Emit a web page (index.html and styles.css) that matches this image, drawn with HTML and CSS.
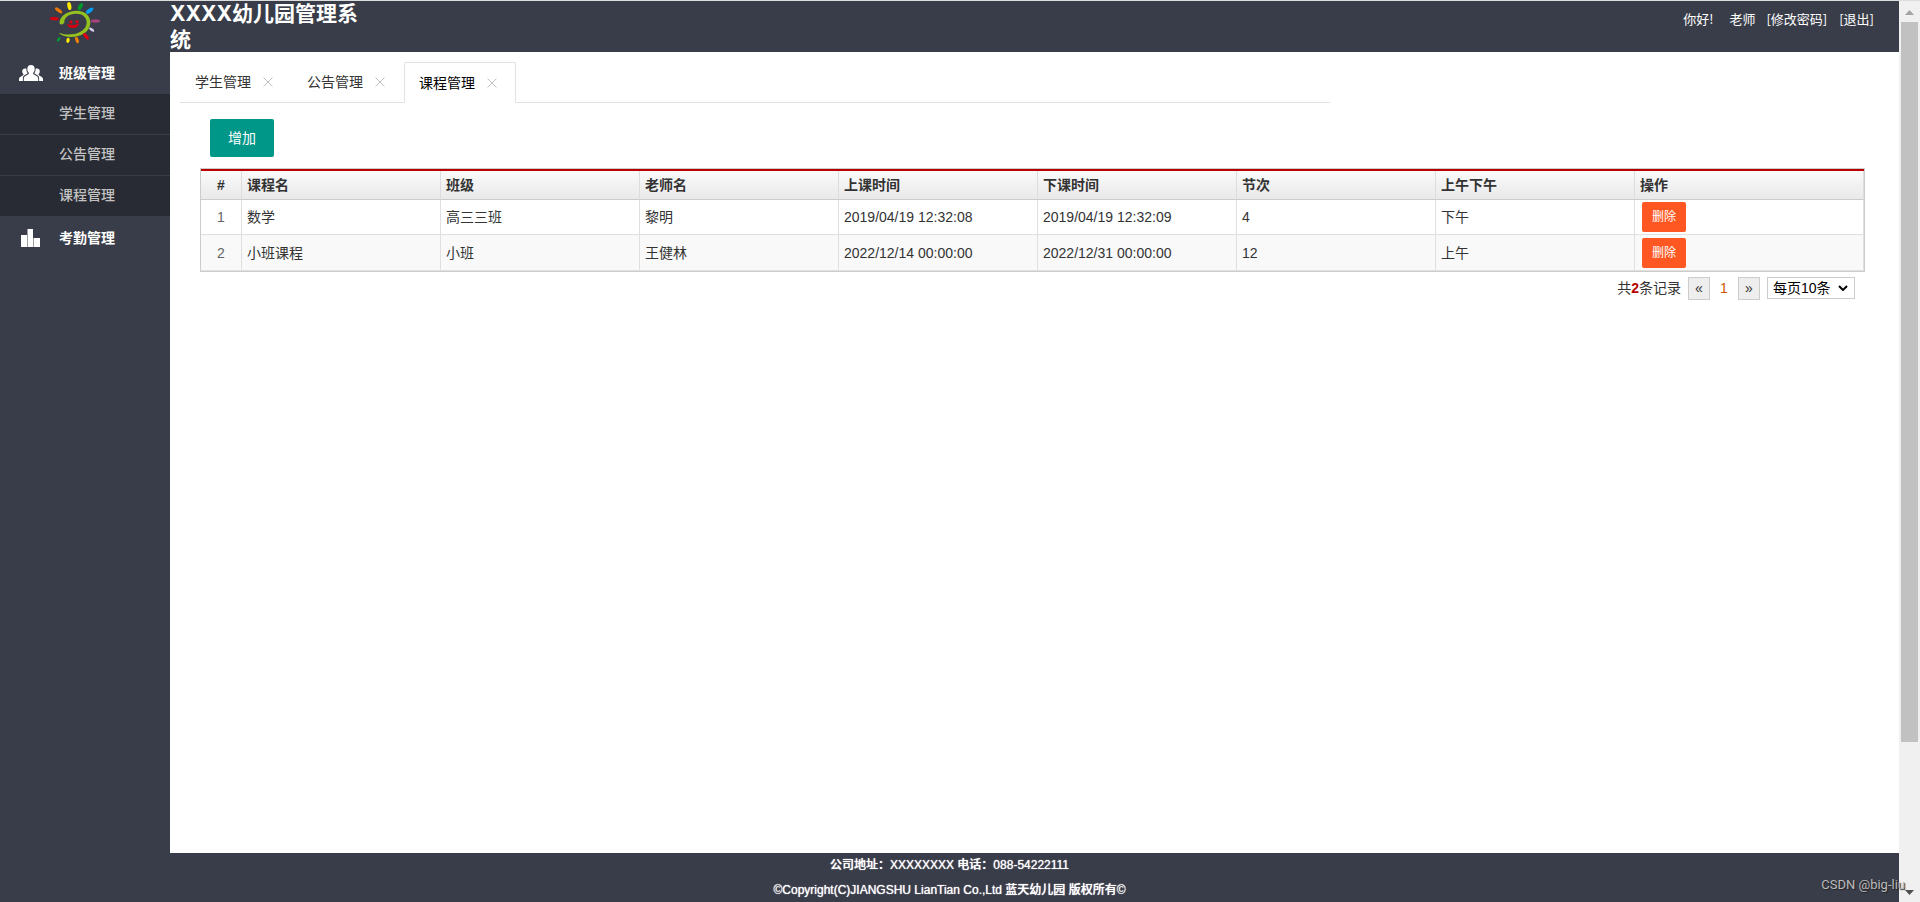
FILE: index.html
```html
<!DOCTYPE html>
<html lang="zh-CN">
<head>
<meta charset="utf-8">
<title>XXXX幼儿园管理系统</title>
<link rel="stylesheet" href="styles.css">
</head>
<body>
<div class="app">
  <div class="page">
    <div class="main">
      <aside class="sidebar">
        <div class="logo">
          <svg width="50" height="44" viewBox="150 3 150 132" aria-label="标志">
            <path d="M179 71C176 54 196 33 228 32C256 32 272 48 271 70C269 96 243 111 214 111C198 111 184 107 176 98C190 103 203 104 214 103C240 101 259 87 260 68C260 51 248 41 229 41C206 41 191 54 193 68C188 74 182 75 179 71Z" fill="#95c11f"/>
            <g fill="#d8000f"><circle cx="213" cy="66" r="5"/><circle cx="231" cy="65" r="5"/><path d="M201 71Q219 80 238 70Q234 84 219 84Q205 84 201 71Z"/></g>
            <ellipse cx="163" cy="56" rx="14" ry="5" fill="#d7000f" transform="rotate(4 163 56)"/>
            <ellipse cx="176" cy="31" rx="13" ry="5" fill="#ee7800" transform="rotate(38 176 31)"/>
            <ellipse cx="208" cy="18" rx="12" ry="6" fill="#ffe800" transform="rotate(80 208 18)"/>
            <ellipse cx="241" cy="20" rx="12" ry="6" fill="#009a2b" transform="rotate(-62 241 20)"/>
            <ellipse cx="269" cy="32" rx="13" ry="6" fill="#009cf2" transform="rotate(-37 269 32)"/>
            <ellipse cx="286" cy="63" rx="14" ry="5" fill="#a5437c"/>
            <ellipse cx="275" cy="89" rx="9" ry="4" fill="#d8cbea" transform="rotate(35 275 89)"/>
            <ellipse cx="258" cy="109" rx="12" ry="5" fill="#e2000f" transform="rotate(52 258 109)"/>
            <ellipse cx="231" cy="120" rx="10" ry="5" fill="#f08000" transform="rotate(72 231 120)"/>
            <ellipse cx="204" cy="121" rx="8" ry="5" fill="#ffec00" transform="rotate(-80 204 121)"/>
            <ellipse cx="176" cy="118" rx="8" ry="4" fill="#009933" transform="rotate(-58 176 118)"/>
          </svg>
        </div>
        <nav class="menu">
          <a class="menu-title" href="#class">
            <svg class="menu-icon" width="24" height="16" viewBox="0 0 24 16"><path fill="#fff" d="M12 0c2.400 0 3.700 1.600 3.700 3.900 0 1.700-.6 3-1.500 3.800v1.200l3.800 2.300c.8.5 1.100 1.400 1.200 2.800V16H4.800v-2c.1-1.400.4-2.300 1.200-2.800l3.800-2.300V7.700c-.9-.8-1.500-2.100-1.500-3.800C8.300 1.600 9.600 0 12 0zM6 3.500c.6 0 1 .1 1.400.3-.1 1.800.3 3.200 1.300 4.500L5.200 10.400C4.200 11.200 3.900 12 3.900 14v2H0v-1.500c0-1.300.4-2 1.200-2.500l3.200-2V9C3.600 8.400 3.200 7.400 3.200 6.300 3.200 4.600 4.300 3.500 6 3.500zM18 3.500c-.6 0-1 .1-1.400.3.100 1.800-.3 3.200-1.300 4.500l3.500 2.100c1 .8 1.300 1.600 1.300 3.600v2H24v-1.500c0-1.300-.4-2-1.200-2.500l-3.200-2V9c.8-.6 1.200-1.600 1.200-2.700 0-1.700-1.100-2.800-2.800-2.800z"/></svg>
            班级管理
          </a>
          <ul class="submenu">
            <li><a href="#students">学生管理</a></li>
            <li><a href="#notices">公告管理</a></li>
            <li><a href="#courses">课程管理</a></li>
          </ul>
          <a class="menu-title" href="#attendance">
            <svg class="menu-icon" width="24" height="18" viewBox="0 0 24 18"><path fill="#fff" d="M2 6h6v12H2zM8.500 0h5.500v18H8.500zM14.500 9H21v9h-6.500z"/></svg>
            考勤管理
          </a>
        </nav>
      </aside>
      <div class="body">
        <header class="header">
          <h1 class="brand">XXXX幼儿园管理系统</h1>
          <div class="user">
            <span class="hello">你好!</span>
            <span>老师</span>
            <a href="#password">[修改密码]</a>
            <a href="#logout">[退出]</a>
          </div>
        </header>
        <ul class="tabs">
          <li class="tab">学生管理<button class="close" aria-label="关闭学生管理"><svg width="10" height="10" viewBox="0 0 10 10"><path d="M.5.5l9 9M9.500.5l-9 9"/></svg></button></li>
          <li class="tab">公告管理<button class="close" aria-label="关闭公告管理"><svg width="10" height="10" viewBox="0 0 10 10"><path d="M.5.5l9 9M9.500.5l-9 9"/></svg></button></li>
          <li class="tab active">课程管理<button class="close" aria-label="关闭课程管理"><svg width="10" height="10" viewBox="0 0 10 10"><path d="M.5.5l9 9M9.500.5l-9 9"/></svg></button></li>
        </ul>
        <main class="content">
          <button class="add">增加</button>
          <div class="grid">
            <table class="table">
              <thead>
                <tr><th class="num">#</th><th class="data">课程名</th><th class="data">班级</th><th class="data">老师名</th><th class="data">上课时间</th><th class="data">下课时间</th><th class="data">节次</th><th class="data">上午下午</th><th>操作</th></tr>
              </thead>
              <tbody>
                <tr><td class="num">1</td><td>数学</td><td>高三三班</td><td>黎明</td><td>2019/04/19 12:32:08</td><td>2019/04/19 12:32:09</td><td>4</td><td>下午</td><td><button class="delete">删除</button></td></tr>
                <tr><td class="num">2</td><td>小班课程</td><td>小班</td><td>王健林</td><td>2022/12/14 00:00:00</td><td>2022/12/31 00:00:00</td><td>12</td><td>上午</td><td><button class="delete">删除</button></td></tr>
              </tbody>
            </table>
          </div>
          <div class="pager">
            <span>共<b class="total">2</b>条记录</span>
            <button class="step" aria-label="上一页">«</button>
            <span class="current">1</span>
            <button class="step" aria-label="下一页">»</button>
            <div class="size">
              <select class="size-select" aria-label="每页条数"><option>每页10条</option></select>
              <svg class="chevron" width="10" height="6" viewBox="0 0 10 6"><path d="M1 1l4 4 4-4"/></svg>
            </div>
          </div>
        </main>
      </div>
    </div>
    <footer class="footer">
      <p>公司地址：XXXXXXXX 电话：088-54222111</p>
      <p>©Copyright(C)JIANGSHU LianTian Co.,Ltd 蓝天幼儿园 版权所有©</p>
    </footer>
  </div>
  <div class="scrollbar">
    <svg width="9" height="5" viewBox="0 0 9 5"><path d="M0 5L4.500 0 9 5z" fill="#a3a3a3"/></svg>
    <div class="track"><div class="thumb"></div></div>
    <svg width="9" height="5" viewBox="0 0 9 5"><path d="M0 0h9L4.500 5z" fill="#505050"/></svg>
  </div>
  <div class="watermark">CSDN @big-liu</div>
</div>
</body>
</html>
```
FILE: styles.css
```css
* {
  box-sizing: border-box;
}

body {
  margin: 0;
  font: 14px/24px "Liberation Sans", "Noto Sans CJK SC", sans-serif;
  color: #333;
  background: #fff;
}

ul,
p,
h1 {
  margin: 0;
  padding: 0;
  list-style: none;
}

a {
  color: inherit;
  text-decoration: none;
}

button,
select {
  margin: 0;
  padding: 0;
  border: 0;
  font: inherit;
  color: inherit;
  background: none;
}

.app {
  position: relative;
  display: flex;
  min-height: 100vh;
  border-top: 1px solid #dcdcdc;
}

.page {
  flex: 1;
  display: flex;
  flex-direction: column;
  min-width: 0;
}

.main {
  flex: 1;
  display: flex;
}

.sidebar {
  width: 170px;
  background: #393d49;
  color: #fff;
}

.logo {
  height: 51px;
  padding-left: 50px;
}

.logo svg {
  display: block;
}

.menu-title {
  display: flex;
  align-items: center;
  gap: 16px;
  height: 42px;
  padding-left: 19px;
  font-weight: bold;
}

.submenu {
  margin-bottom: 1px;
  background: #282b33;
  color: #c2c2c2;
  font-weight: 500;
}

.submenu a {
  display: block;
  height: 40px;
  padding-left: 59px;
  line-height: 38px;
}

.submenu li + li {
  border-top: 1px solid #393d49;
}

.body {
  flex: 1;
  min-width: 0;
}

.header {
  display: flex;
  justify-content: space-between;
  height: 51px;
  background: #393d49;
  color: #fff;
}

.brand {
  width: 200px;
  font: bold 21px/26px Inter, "Noto Sans CJK SC", sans-serif;
}

.user {
  display: flex;
  gap: 10px;
  padding: 6px 24px 0 0;
  font: 13px/24px "Noto Sans CJK SC", sans-serif;
}

.user a {
  padding: 0 1px;
}

.hello {
  margin-right: 6px;
}

.tabs {
  display: flex;
  width: 1150px;
  max-width: 100%;
  height: 41px;
  margin: 10px 0 0 10px;
  border-bottom: 1px solid #e2e2e2;
}

.tab {
  display: flex;
  align-items: center;
  gap: 8px;
  height: 40px;
  padding: 0 15px;
}

.tab.active {
  height: 41px;
  padding: 0 14px;
  border: 1px solid #e2e2e2;
  border-bottom-color: #fff;
  border-radius: 2px 2px 0 0;
  color: #000;
}

.close {
  display: flex;
  align-items: center;
  justify-content: center;
  width: 18px;
  height: 18px;
  stroke: #c2c2c2;
}

.content {
  padding: 16px 34px 0 30px;
}

.add {
  display: block;
  width: 64px;
  height: 38px;
  margin: 0 0 11px 10px;
  border-radius: 2px;
  background: #009688;
  color: #fff;
}

.grid {
  border: 1px solid #ccc;
}

.table {
  width: 100%;
  border-collapse: separate;
  border-spacing: 0;
  border-top: 2px solid #b80000;
  table-layout: fixed;
}

.table th {
  height: 29px;
  padding: 0 5px;
  border-right: 1px solid #ddd;
  border-bottom: 1px solid #ccc;
  background: linear-gradient(#fafafa, #e9e9e9);
  text-align: left;
}

.table td {
  height: 36px;
  padding: 0 5px;
  border-right: 1px solid #e0e0e0;
  border-bottom: 1px solid #e0e0e0;
}

.table tbody tr:first-child td {
  height: 35px;
}

.table tbody tr:nth-child(even) {
  background: #f9f9f9;
}

.table th.num,
.table td.num {
  width: 41px;
  text-align: center;
}

.table td.num {
  color: #666;
}

.data {
  width: 199px;
}

.delete {
  display: block;
  width: 44px;
  height: 30px;
  margin-left: 2px;
  border-radius: 2px;
  background: #ff5722;
  color: #fff;
  font-size: 12px;
}

.pager {
  display: flex;
  align-items: center;
  justify-content: flex-end;
  gap: 7px;
  padding: 4px 10px 0 0;
}

.total {
  color: #b80000;
}

.step {
  width: 22px;
  height: 23px;
  border: 1px solid #ccc;
  background: #eee;
  line-height: 20px;
}

.current {
  width: 14px;
  text-align: center;
  color: #c50;
}

.size {
  position: relative;
}

.size-select {
  display: block;
  width: 88px;
  height: 22px;
  padding: 0 5px;
  border: 1px solid #ccc;
  background: #fff;
  color: #000;
  line-height: 20px;
  appearance: none;
}

.chevron {
  position: absolute;
  top: 8px;
  right: 7px;
  fill: none;
  stroke: #000;
  stroke-width: 2;
  pointer-events: none;
}

.footer {
  height: 49px;
  background: #393d49;
  color: #fff;
  font-size: 12px;
  font-weight: 500;
  line-height: 25px;
  text-align: center;
  text-shadow: 0 0 1px #fff;
}

.scrollbar {
  display: flex;
  flex-direction: column;
  align-items: center;
  width: 21px;
  padding: 9px 0 7px;
  background: #f0f0f0;
}

.track {
  flex: 1;
  width: 17px;
  padding: 7px 0;
}

.thumb {
  height: calc(84% - 3px);
  background: #c1c1c1;
}

.watermark {
  position: absolute;
  right: 15px;
  bottom: 5px;
  color: #bbb;
  font: 13px/24px Roboto, sans-serif;
  text-shadow: 1px 1px 1px #222;
}
```
